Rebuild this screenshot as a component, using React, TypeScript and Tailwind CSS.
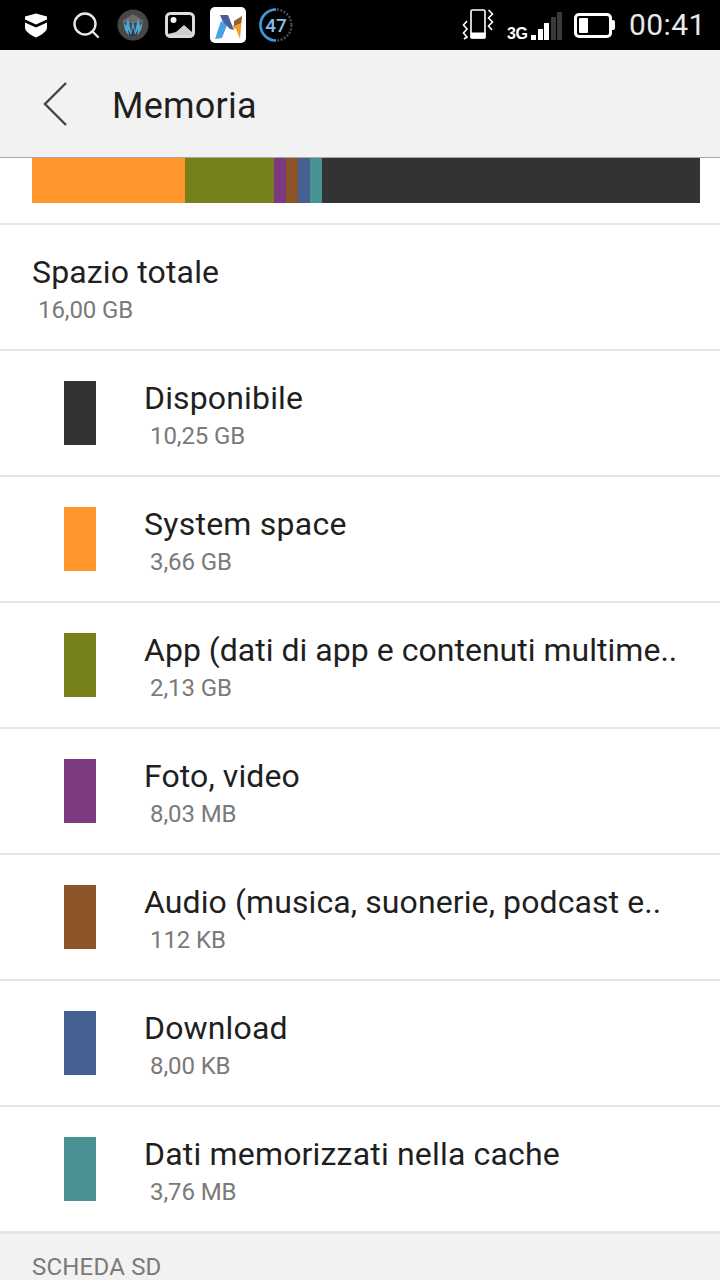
import React from "react";

const rows = [
  { color: "bg-[#333333]", name: "Disponibile", size: "10,25 GB", track: "tracking-[0.15px]" },
  { color: "bg-[#ff972e]", name: "System space", size: "3,66 GB", track: "tracking-[0.25px]" },
  { color: "bg-[#76811b]", name: "App (dati di app e contenuti multime..", size: "2,13 GB", track: "tracking-[0.02px]" },
  { color: "bg-[#7c3a80]", name: "Foto, video", size: "8,03 MB", track: "tracking-[0.1px]" },
  { color: "bg-[#8c5529]", name: "Audio (musica, suonerie, podcast e..", size: "112 KB", track: "tracking-[0.1px]" },
  { color: "bg-[#466093]", name: "Download", size: "8,00 KB", track: "tracking-[0.15px]" },
  { color: "bg-[#489294]", name: "Dati memorizzati nella cache", size: "3,76 MB", track: "tracking-[0.18px]" },
];

const segments = [
  "w-[153px] bg-[#ff972e]",
  "w-[89px] bg-[#76811b]",
  "w-[12px] bg-[#7c3a80]",
  "w-[12px] bg-[#8c5529]",
  "w-[12px] bg-[#466093]",
  "w-[12px] bg-[#489294]",
  "flex-1 bg-[#333333]",
];

function StatusBar() {
  return (
    <div className="flex h-[50px] items-center bg-black pl-[25px] pr-[15px]">
      {/* shield */}
      <svg width="22" height="25" viewBox="0 0 22 25" className="mr-[25px]">
        <path d="M0 3.5 L11 0.5 L22 3.5 V6.5 L11 11.5 L0 6.5 Z" fill="#fff" />
        <path d="M0 9.5 L11 14.5 L22 9.5 V14.5 C22 19 15 22.5 11 24.5 C7 22.5 0 19 0 14.5 Z" fill="#fff" />
      </svg>
      {/* search */}
      <svg width="28" height="28" viewBox="0 0 28 28" className="mr-[17px]" fill="none" stroke="#e8e8e8">
        <circle cx="13" cy="13" r="10.5" strokeWidth="2.4" />
        <path d="M20.5 20.5 L26 26" strokeWidth="2.4" strokeLinecap="round" />
      </svg>
      {/* audio app */}
      <svg width="32" height="32" viewBox="0 0 32 32" className="mr-[16px]">
        <circle cx="16" cy="16" r="15.5" fill="#474747" />
        <path d="M5 12 L10 9 L16 5 L22 9 L27 12 L22 14 H10 Z" fill="#6a6a6a" />
        <path d="M6 12 L9 17 L11 9 L14 23 L16 11 L18 23 L21 9 L23 17 L26 12 L24 21 L20 27 H12 L8 21 Z" fill="#4fa6d8" />
        <path d="M11 20 L14 26 L16 18 L18 26 L21 20 L20 27 H12 Z" fill="#2f3a40" />
      </svg>
      {/* gallery */}
      <svg width="30" height="26" viewBox="0 0 30 26" className="mr-[15px]">
        <rect x="1.5" y="1.5" width="27" height="23" rx="4" fill="#000" stroke="#dcdcdc" strokeWidth="3" />
        <circle cx="8.5" cy="8" r="3" fill="#f2f2f2" />
        <path d="M3 23 L3 22 L11 20 L19 13 L27 20 V23 Z" fill="#cfcfcf" />
      </svg>
      {/* M app */}
      <div className="mr-[13px] flex h-[36px] w-[36px] items-center justify-center rounded-[5px] bg-white">
        <svg width="36" height="36" viewBox="0 0 36 36">
          <path d="M5 32 L11 14 L17 18 L12 31 Z" fill="#45a3e8" />
          <path d="M10 8 H18 L24 23 L20 22 L13 15 Z" fill="#4a5f9e" />
          <path d="M22 20 L32 9 L30 32 L26 22 Z" fill="#f59a2e" />
          <path d="M24 14 L32 9 L31 16 L24 19 Z" fill="#8c6236" />
        </svg>
      </div>
      {/* counter */}
      <div className="relative flex h-[34px] w-[34px] items-center justify-center">
        <svg width="34" height="34" viewBox="0 0 34 34" className="absolute left-0 top-0" fill="none">
          <circle cx="17" cy="17" r="15.5" stroke="#4a4f55" strokeWidth="2.4" strokeDasharray="2 1.5" />
          <path d="M17 1.5 A15.5 15.5 0 0 0 17 32.5" stroke="#3f97dc" strokeWidth="2.6" />
        </svg>
        <span className="relative text-[19px] font-medium leading-none text-[#86bfea]">47</span>
      </div>
      <div className="flex-1" />
      {/* vibrate */}
      <svg width="32" height="34" viewBox="0 0 32 34" className="mr-[13px]" fill="none" stroke="#fff">
        <rect x="9" y="2" width="14" height="28" rx="1.5" strokeWidth="1.6" />
        <rect x="9" y="25" width="14" height="5" fill="#fff" strokeWidth="1" />
        <path d="M5 13 L1.5 17 L5 21 L1.5 25 L5 29 L2 31" strokeWidth="1.6" />
        <path d="M26.5 2 L30.5 6 L26.5 10 L30.5 14 L26.5 18 L30 22" strokeWidth="1.6" />
      </svg>
      {/* signal */}
      <div className="mr-[12px] flex h-[30px] items-end">
        <span className="w-[24px] text-[16px] font-bold leading-[12px] tracking-[-0.4px] text-white font-['Liberation_Sans',sans-serif]">3G</span>
        <div className="flex items-end gap-[1.5px]">
          <div className="h-[5px] w-[5px] bg-white" />
          <div className="h-[11px] w-[5px] bg-white" />
          <div className="h-[17px] w-[5px] bg-white" />
          <div className="h-[23px] w-[5px] bg-[#3a3a3a]" />
          <div className="h-[28px] w-[5px] bg-[#3a3a3a]" />
        </div>
      </div>
      {/* battery */}
      <div className="mr-[14px] flex items-center">
        <div className="flex h-[25px] w-[38px] items-center rounded-[5px] border-[3px] border-white pl-[2px]">
          <div className="h-[15px] w-[9px] rounded-[1px] bg-white" />
        </div>
        <div className="h-[10px] w-[3px] rounded-r-[2px] bg-white" />
      </div>
      <span className="w-[76px] text-[30px] leading-none tracking-[0.4px] text-[#e8e8e8]">00:41</span>
    </div>
  );
}

function Toolbar() {
  return (
    <div className="flex h-[108px] items-center border-b border-[#a6a6a6] bg-[#f2f2f2]">
      <svg width="26" height="46" viewBox="0 0 26 46" className="ml-[43px] mr-[43px]" fill="none">
        <path d="M23 2 L2 23 L23 44" stroke="#444444" strokeWidth="2.4" />
      </svg>
      <span className="pt-[4px] text-[36px] leading-none tracking-[0.25px] text-[#1f1f1f]">Memoria</span>
    </div>
  );
}

function Row({ color, name, size, track }: { color: string; name: string; size: string; track: string }) {
  return (
    <div className="flex h-[126px] items-center border-b-2 border-[#e6e6e6] pl-[64px]">
      <div className={`h-[64px] w-[32px] ${color}`} />
      <div className="ml-[48px] flex flex-col pt-[1px]">
        <span className={`h-[44px] text-[32px] leading-[42px] text-[#1f1f1f] ${track}`}>{name}</span>
        <span className="ml-[6px] h-[30px] text-[24px] leading-[30px] tracking-[-0.1px] text-[#7a7a7a]">{size}</span>
      </div>
    </div>
  );
}

export default function App() {
  return (
    <div className="h-[1280px] w-[720px] overflow-hidden bg-white font-['Roboto',sans-serif]">
      <StatusBar />
      <Toolbar />
      <div className="border-b-2 border-[#e6e6e6] pb-[20px] pl-[32px] pr-[20px]">
        <div className="flex h-[45px]">
          {segments.map((s) => (
            <div key={s} className={s} />
          ))}
        </div>
      </div>
      <div className="flex h-[126px] flex-col justify-center border-b-2 border-[#e6e6e6] pl-[32px] pt-[2px]">
        <span className="h-[44px] text-[32px] leading-[42px] tracking-[0.15px] text-[#1f1f1f]">Spazio totale</span>
        <span className="ml-[6px] h-[30px] text-[24px] leading-[30px] tracking-[-0.1px] text-[#7a7a7a]">16,00 GB</span>
      </div>
      {rows.map((r) => (
        <Row key={r.name} {...r} />
      ))}
      <div className="h-[60px] border-t border-[#e6e6e6] bg-[#f2f2f2] pl-[32px] pt-[19px] text-[24px] leading-[28px] tracking-[0.2px] text-[#7a7a7a]">SCHEDA SD</div>
    </div>
  );
}
